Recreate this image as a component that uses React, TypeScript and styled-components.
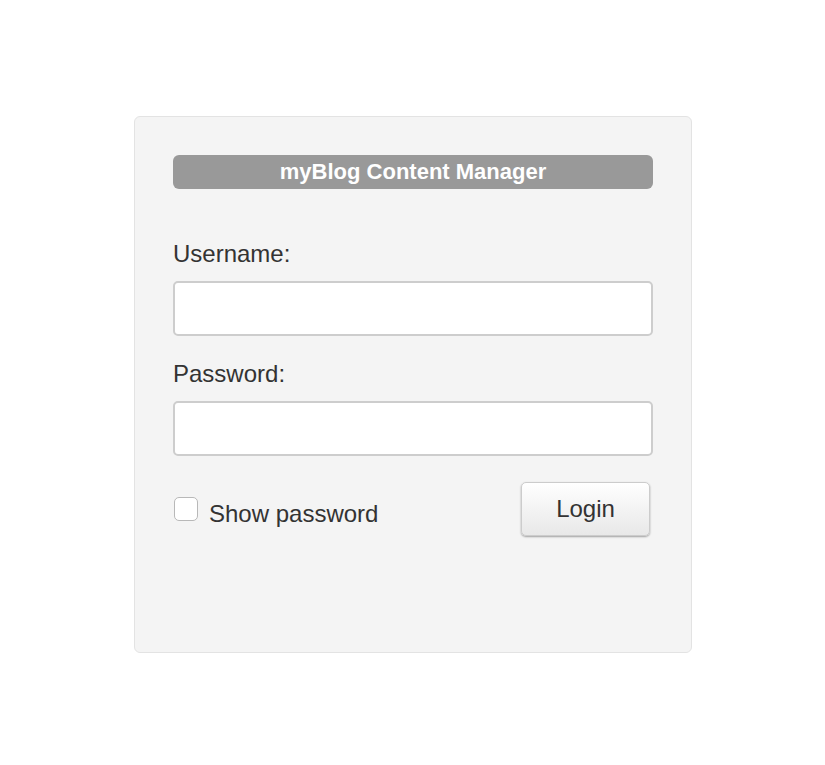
import { useState } from 'react';
import styled, { createGlobalStyle } from 'styled-components';

const GlobalStyle = createGlobalStyle`
  html, body {
    margin: 0;
    padding: 0;
    background: #ffffff;
    font-family: 'Liberation Sans', Arial, Helvetica, sans-serif;
    color: #333333;
  }
`;

const Page = styled.div`
  padding: 116px 0 0 134px;
`;

const Card = styled.form`
  box-sizing: border-box;
  width: 558px;
  height: 537px;
  padding: 38px 38px 0;
  background: #f4f4f4;
  border: 1px solid #e3e3e3;
  border-radius: 6px;
  display: flex;
  flex-direction: column;
`;

const Title = styled.h1`
  margin: 0;
  height: 34px;
  line-height: 34px;
  background: #999999;
  border-radius: 6px;
  color: #ffffff;
  font-size: 22px;
  font-weight: bold;
  text-align: center;
`;

const Label = styled.label<{ $top: number }>`
  display: block;
  margin-top: ${(p) => p.$top}px;
  font-size: 24px;
  line-height: 28px;
  color: #333333;
`;

const Input = styled.input`
  box-sizing: border-box;
  display: block;
  width: 100%;
  height: 55px;
  margin-top: 13px;
  padding: 0 12px;
  background: #ffffff;
  border: 2px solid #cdcdcd;
  border-radius: 5px;
  font-size: 22px;
  font-family: inherit;
  outline: none;
`;

const Actions = styled.div`
  display: flex;
  justify-content: space-between;
  align-items: flex-start;
  margin-top: 26px;
`;

const CheckLabel = styled.label`
  display: flex;
  align-items: flex-start;
  gap: 11px;
  padding-left: 1px;
  font-size: 24px;
  line-height: 28px;
  color: #333333;
  cursor: pointer;
`;

const CheckText = styled.span`
  margin-top: 18px;
`;

const Check = styled.input`
  appearance: none;
  margin: 15px 0 0;
  width: 24px;
  height: 24px;
  background: #ffffff;
  border: 1px solid #b8b8b8;
  border-radius: 5px;
  cursor: pointer;

  &:checked {
    background: #5b9dd9;
    border-color: #4a8ac4;
  }
`;

const Button = styled.button`
  box-sizing: border-box;
  width: 129px;
  height: 54px;
  margin-right: 3px;
  background: linear-gradient(#ffffff, #e8e8e8);
  border: 1px solid #cccccc;
  border-radius: 5px;
  box-shadow: 0 1px 2px rgba(0, 0, 0, 0.35);
  font-family: inherit;
  font-size: 24px;
  color: #333333;
  cursor: pointer;
`;

export default function App() {
  const [show, setShow] = useState(false);

  return (
    <>
      <GlobalStyle />
      <Page>
        <Card onSubmit={(e) => e.preventDefault()}>
          <Title>myBlog Content Manager</Title>
          <Label $top={51} htmlFor="username">Username:</Label>
          <Input id="username" type="text" />
          <Label $top={24} htmlFor="password">Password:</Label>
          <Input id="password" type={show ? 'text' : 'password'} />
          <Actions>
            <CheckLabel>
              <Check type="checkbox" checked={show} onChange={(e) => setShow(e.target.checked)} />
              <CheckText>Show password</CheckText>
            </CheckLabel>
            <Button type="submit">Login</Button>
          </Actions>
        </Card>
      </Page>
    </>
  );
}
